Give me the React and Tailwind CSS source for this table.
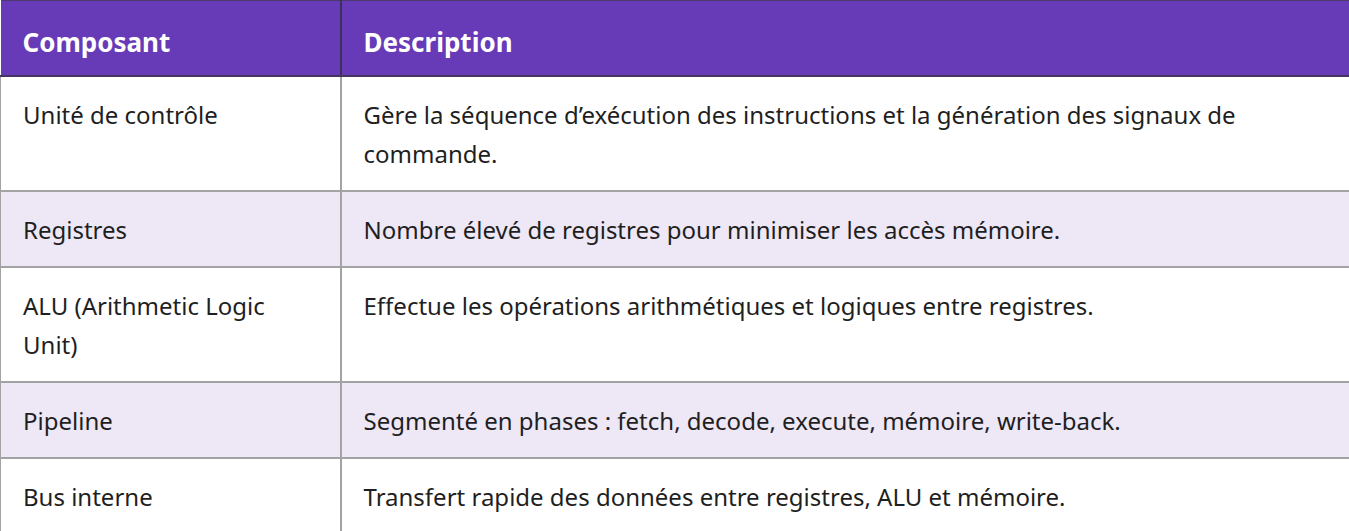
import React from 'react';

const rows = [
  ['Unité de contrôle', 'Gère la séquence d’exécution des instructions et la génération des signaux de commande.'],
  ['Registres', 'Nombre élevé de registres pour minimiser les accès mémoire.'],
  ['ALU (Arithmetic Logic Unit)', 'Effectue les opérations arithmétiques et logiques entre registres.'],
  ['Pipeline', 'Segmenté en phases : fetch, decode, execute, mémoire, write-back.'],
  ['Bus interne', 'Transfert rapide des données entre registres, ALU et mémoire.'],
];

export default function App() {
  return (
    <div className="min-h-screen bg-white font-['Noto_Sans',sans-serif]">
      <table className="w-[1349px] border-collapse table-fixed text-[#1f1f1f]">
        <colgroup>
          <col className="w-[340px]" />
          <col />
        </colgroup>
        <thead>
          <tr className="bg-[#673ab7] text-white h-[75px]">
            <th className="text-left font-bold text-[26px] px-[22px] pt-[9px] border-t border-t-[#4b3a6e] border-b-2 border-b-[#44355f] border-r-2 border-r-[#3e3158]">
              Composant
            </th>
            <th className="text-left font-bold text-[26px] px-[22px] pt-[9px] border-t border-t-[#4b3a6e] border-b-2 border-b-[#44355f]">
              Description
            </th>
          </tr>
        </thead>
        <tbody>
          {rows.map(([name, desc], i) => (
            <tr key={name} className={i % 2 === 1 ? 'bg-[#ede7f6]' : 'bg-white'}>
              <td className="align-top px-[22px] pt-[18px] pb-[17px] text-[24px] leading-[39px] border-2 border-[#a3a3a3] border-l">
                {name}
              </td>
              <td className="align-top px-[22px] pt-[18px] pb-[17px] text-[24px] leading-[39px] border-2 border-[#a3a3a3] border-r-0">
                {desc}
              </td>
            </tr>
          ))}
        </tbody>
      </table>
    </div>
  );
}
